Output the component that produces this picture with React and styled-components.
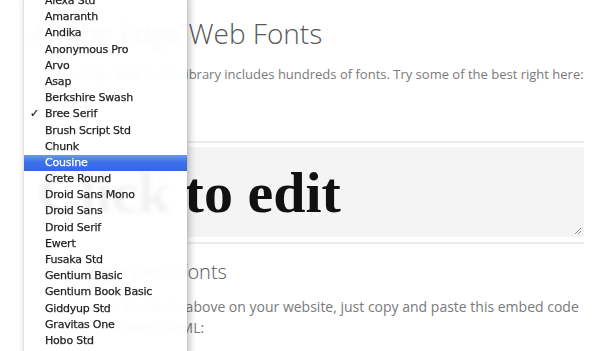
import React from 'react';
import styled, { createGlobalStyle } from 'styled-components';

const FONTS = [
  'Alexa Std',
  'Amaranth',
  'Andika',
  'Anonymous Pro',
  'Arvo',
  'Asap',
  'Berkshire Swash',
  'Bree Serif',
  'Brush Script Std',
  'Chunk',
  'Cousine',
  'Crete Round',
  'Droid Sans Mono',
  'Droid Sans',
  'Droid Serif',
  'Ewert',
  'Fusaka Std',
  'Gentium Basic',
  'Gentium Book Basic',
  'Giddyup Std',
  'Gravitas One',
  'Hobo Std',
  'Inconsolata',
];

const GlobalStyle = createGlobalStyle`
  html, body {
    margin: 0;
    padding: 0;
    background: #ffffff;
    overflow: hidden;
  }
  body {
    font-family: "Open Sans", "Liberation Sans", sans-serif;
  }
`;

const Page = styled.div`
  position: relative;
  width: 606px;
  height: 351px;
  overflow: hidden;
`;

const Content = styled.main`
  display: flex;
  flex-direction: column;
  width: 554px;
  padding: 16px 0 0 30px;
`;

const Title = styled.h1`
  margin: 0;
  font-size: 28px;
  line-height: 34px;
  font-weight: 300;
  color: #585858;
  white-space: nowrap;
`;

const Lead = styled.p`
  margin: 14px 0 0;
  padding-left: ${p => p.$inset || 0}px;
  font-size: 13px;
  line-height: 20px;
  color: #7a7a7a;
  white-space: nowrap;
`;

const Editor = styled.div`
  margin-top: 57px;
  padding: 4px 0 5px;
  border-top: 2px solid #ececec;
  border-bottom: 2px solid #ececec;
`;

const EditArea = styled.div`
  position: relative;
  height: 90px;
  background: #f4f4f4;
  padding-left: 8px;
  display: flex;
  align-items: center;
  font-family: "Liberation Serif", "DejaVu Serif", serif;
  font-weight: 700;
  font-size: 58px;
  color: #111;
  white-space: nowrap;
`;

const Grip = styled.svg`
  position: absolute;
  right: 2px;
  bottom: 2px;
`;

const Heading = styled.h2`
  margin: 14px 0 0;
  padding-left: ${p => p.$inset || 0}px;
  font-size: 20px;
  line-height: 28px;
  font-weight: 300;
  color: #5a5a5a;
`;

const Body = styled.p`
  margin: 10px 0 0;
  padding-left: ${p => p.$inset || 0}px;
  font-size: 14px;
  line-height: 21px;
  color: #7a7a7a;
  white-space: nowrap;
`;

const Menu = styled.ul`
  position: absolute;
  top: -11px;
  left: 24px;
  width: 163px;
  margin: 0;
  padding: 4px 0;
  list-style: none;
  background: rgba(255, 255, 255, 0.95);
  backdrop-filter: blur(2px);
  box-shadow: 0 0 1px rgba(0, 0, 0, 0.25), 2px 4px 8px rgba(0, 0, 0, 0.28);
  font-family: "DejaVu Sans", "Liberation Sans", sans-serif;
  font-size: 11px;
  letter-spacing: -0.2px;
`;

const Item = styled.li`
  position: relative;
  height: 16.2px;
  line-height: 16.2px;
  padding-left: 21px;
  color: ${p => (p.$active ? '#ffffff' : '#1e1e1e')};
  -webkit-text-stroke: 0.25px ${p => (p.$active ? '#ffffff' : '#1e1e1e')};
  background: ${p =>
    p.$active ? 'linear-gradient(#6a98f4, #3d70ea 45%, #3567e6)' : 'transparent'};
  white-space: nowrap;
`;

const Check = styled.span`
  position: absolute;
  left: 6px;
  top: 0;
  font-size: 11px;
  color: #222;
`;

export default function App() {
  return (
    <Page>
      <GlobalStyle />
      <Content>
        <Title>Adobe Edge Web Fonts</Title>
        <Lead $inset={26}>
          The Edge Web Fonts library includes hundreds of fonts. Try some of the best right here:
        </Lead>
        <Editor>
          <EditArea>
            Click to edit
            <Grip width="8" height="8" viewBox="0 0 8 8">
              <path d="M7 1 L1 7 M7 4 L4 7" stroke="#8a8a8a" strokeWidth="1" />
            </Grip>
          </EditArea>
        </Editor>
        <Heading $inset={12}>Use Edge Web Fonts</Heading>
        <Body $inset={47}>
          To use the fonts above on your website, just copy and paste this embed code
          <br />
          in your site's HTML:
        </Body>
      </Content>
      <Menu>
        {FONTS.map(name => (
          <Item key={name} $active={name === 'Cousine'}>
            {name === 'Bree Serif' && <Check>✓</Check>}
            {name}
          </Item>
        ))}
      </Menu>
    </Page>
  );
}
